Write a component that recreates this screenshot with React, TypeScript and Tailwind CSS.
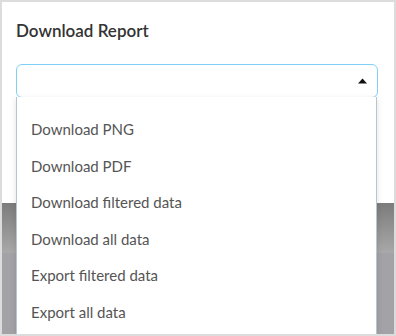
const items = [
  "Download PNG",
  "Download PDF",
  "Download filtered data",
  "Download all data",
  "Export filtered data",
  "Export all data",
];

export default function App() {
  return (
    <div
      className="relative flex h-[336px] w-[396px] flex-col overflow-hidden border-2 border-[#dcdcdc] bg-white"
      style={{ fontFamily: "Lato, 'Open Sans', sans-serif" }}
    >
      <div className="h-[201px] bg-white pl-[14px] pr-[16px] pt-[19px]">
        <h2 className="text-[17px] font-semibold leading-[20px] text-[#333333]">
          Download Report
        </h2>
        <div className="mt-[23px] flex h-[34px] items-center justify-end rounded-[6px] border-[1.5px] border-[#7fd0f7] pr-[10px]">
          <svg width="9" height="6" viewBox="0 0 9 6">
            <path d="M0 5.5 L4.5 0.5 L9 5.5 Z" fill="#111" />
          </svg>
        </div>
      </div>
      <div className="flex flex-1 flex-col">
        <div className="h-[50px] bg-gradient-to-b from-[#7c7c7c] to-[#a9a9a9]" />
        <div className="flex-1 bg-[#a3a2a6]" />
      </div>
      <div className="absolute bottom-0 left-[14px] top-[95px] w-[361px] border-x border-[#b9c4d2] bg-white pt-[14px] shadow-[0_2px_6px_rgba(0,0,0,0.12)]">
        {items.map((t) => (
          <div
            key={t}
            className="flex h-[36.5px] items-center pl-[14px] text-[15px] text-[#555555]"
          >
            {t}
          </div>
        ))}
      </div>
    </div>
  );
}
